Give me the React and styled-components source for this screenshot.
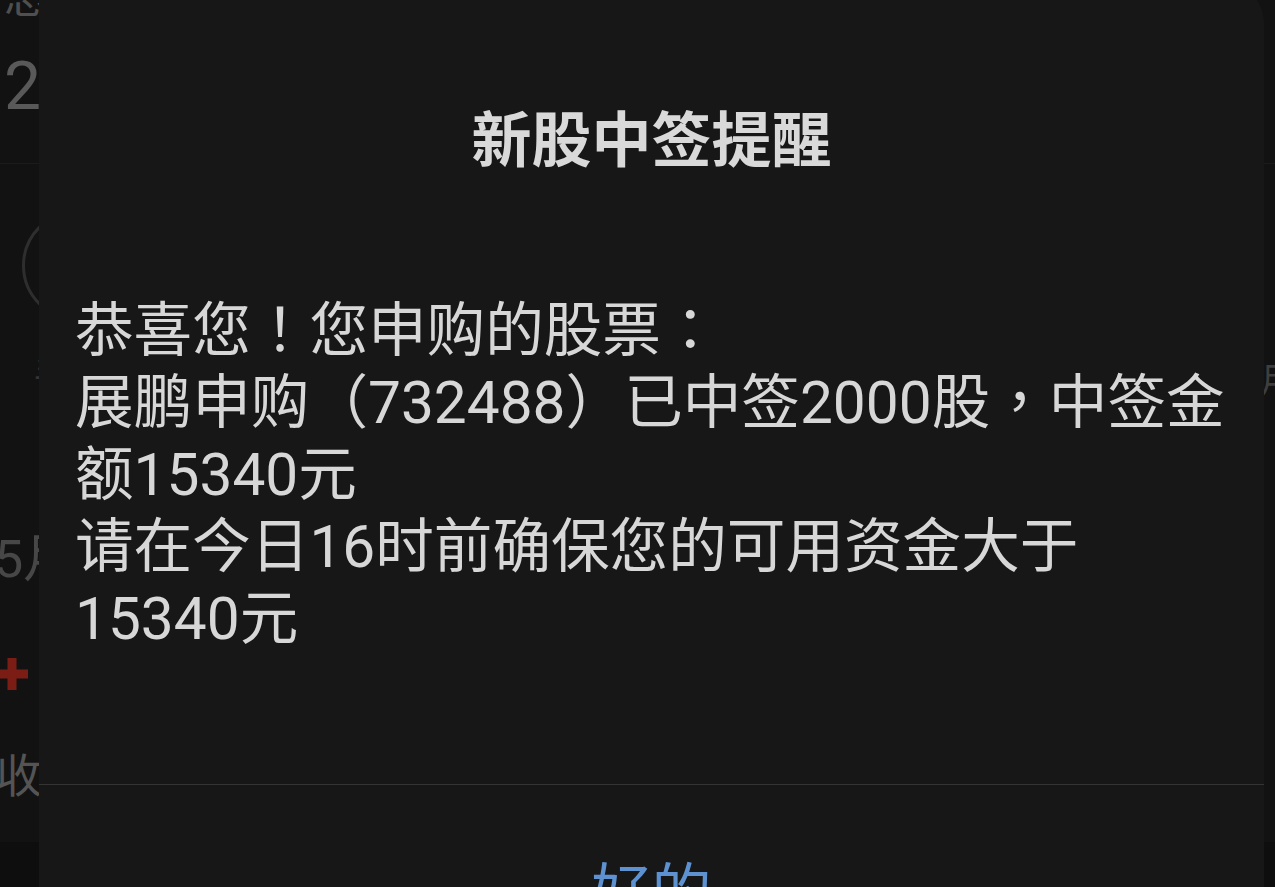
import styled, { createGlobalStyle } from "styled-components";

const GlobalStyle = createGlobalStyle`
  html, body {
    margin: 0;
    padding: 0;
    background: #121212;
    overflow: hidden;
  }
  * { box-sizing: border-box; }
`;

const Screen = styled.div`
  position: relative;
  width: 1275px;
  height: 887px;
  overflow: hidden;
  background: #121212;
  font-family: Roboto, "Noto Sans CJK SC", sans-serif;
`;

/* ---- the app page lying under the dialog ---- */

const BackPage = styled.div`
  display: flex;
  flex-direction: column;
  height: 100%;
`;

const Header = styled.header`
  display: flex;
  flex-direction: column;
  height: 164px;
  padding-left: 4px;
  border-bottom: 1px solid #1b1b1b;
`;

const Caption = styled.span`
  margin-top: -28px;
  font-family: "Noto Sans CJK SC", sans-serif;
  font-size: 44px;
  line-height: 44px;
  color: #4f4f4f;
`;

const BigFigure = styled.span`
  margin-top: 38px;
  font-size: 66px;
  line-height: 66px;
  color: #595959;
`;

const Middle = styled.div`
  flex: 1;
  display: flex;
  justify-content: space-between;
`;

const LeftRail = styled.div`
  display: flex;
  flex-direction: column;
  width: 160px;
`;

const Ring = styled.div`
  width: 111px;
  height: 111px;
  margin: 46px 0 0 22px;
  border: 3px solid #2e2e2e;
  border-radius: 50%;
`;

const RailText = styled.span`
  margin-top: ${(p) => p.$top}px;
  margin-left: ${(p) => p.$left}px;
  font-size: ${(p) => p.$size}px;
  line-height: ${(p) => p.$size}px;
  color: ${(p) => p.$color};
  white-space: nowrap;
`;

const PlusIcon = styled.svg`
  display: block;
  margin: 72px 0 0 -4px;
`;

const RightRail = styled.div`
  width: 13px;
  display: flex;
  flex-direction: column;
`;

const Footer = styled.div`
  height: 45px;
  background: #0e0e0e;
`;

/* ---- dialog ---- */

const Dialog = styled.div`
  position: absolute;
  top: -21px;
  left: 39px;
  width: 1225px;
  bottom: -60px;
  display: flex;
  flex-direction: column;
  background: #171717;
  border-top-right-radius: 45px;
`;

const Title = styled.h2`
  margin: 117px 0 0;
  font-family: "Noto Sans CJK SC", sans-serif;
  font-size: 60px;
  line-height: 80px;
  font-weight: 700;
  text-align: center;
  color: #d9d9d9;
`;

const Message = styled.div`
  margin-top: 119px;
  padding-left: 36px;
`;

const Line = styled.p`
  margin: 0;
  font-size: 58.6px;
  line-height: 72px;
  color: #d7d7d7;
  white-space: nowrap;
`;

// full-width marks sit in the middle of their box, as on the phone
const Punct = styled.span`
  font-family: "Noto Sans CJK TC", sans-serif;
  line-height: 0;
`;

const Divider = styled.hr`
  margin: 129px 0 0;
  border: 0;
  height: 1px;
  background: #343434;
`;

const ActionButton = styled.button`
  margin-top: 62px;
  padding: 0;
  border: 0;
  background: none;
  font-family: "Noto Sans CJK SC", sans-serif;
  font-size: 60px;
  line-height: 80px;
  color: #5d91d0;
  text-align: center;
  cursor: pointer;
`;

export default function App() {
  return (
    <Screen>
      <GlobalStyle />
      <BackPage>
        <Header>
          <Caption>总</Caption>
          <BigFigure>2</BigFigure>
        </Header>
        <Middle>
          <LeftRail>
            <Ring />
            <RailText $top={37} $left={34} $size={36} $color="#343434">
              手
            </RailText>
            <RailText $top={140} $left={-6} $size={52} $color="#474747">
              5月
            </RailText>
            <PlusIcon width="32" height="32" viewBox="0 0 32 32">
              <rect x="0" y="11.5" width="32" height="9" fill="#7b1d15" />
              <rect x="11.5" y="0" width="9" height="32" fill="#7b1d15" />
            </PlusIcon>
            <RailText $top={63} $left={-4} $size={46} $color="#545454">
              收
            </RailText>
          </LeftRail>
          <RightRail>
            <RailText $top={200} $left={-3} $size={36} $color="#3e3e3e">
              月
            </RailText>
          </RightRail>
        </Middle>
        <Footer />
      </BackPage>

      <Dialog>
        <Title>新股中签提醒</Title>
        <Message>
          <Line>
            恭喜您<Punct>！</Punct>您申购的股票<Punct>：</Punct>
          </Line>
          <Line>
            展鹏申购（732488）已中签2000股<Punct>，</Punct>中签金
          </Line>
          <Line>额15340元</Line>
          <Line>请在今日16时前确保您的可用资金大于</Line>
          <Line>15340元</Line>
        </Message>
        <Divider />
        <ActionButton>好的</ActionButton>
      </Dialog>
    </Screen>
  );
}
